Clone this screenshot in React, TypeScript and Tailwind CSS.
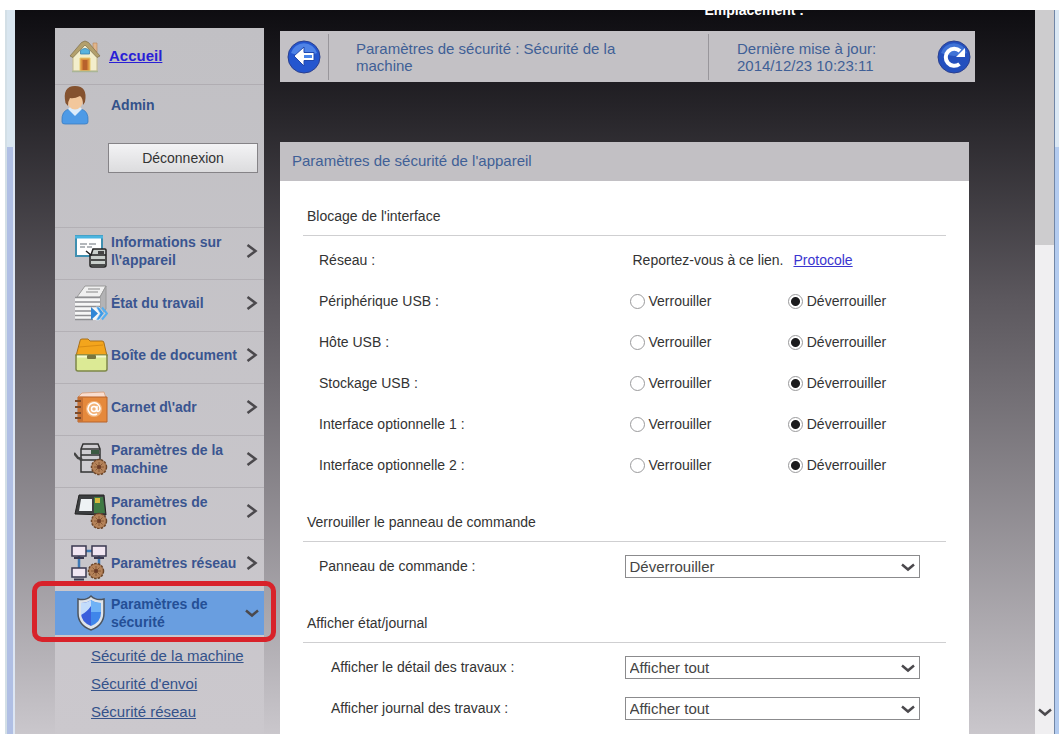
import React, { useId, useState } from "react";

function HomeIcon() {
  return (
    <svg viewBox="0 0 32 34" className="h-[34px] w-8" aria-hidden="true">
      <path d="M24 4h4v9h-4z" fill="#e0b58c" stroke="#b98356" strokeWidth=".6" />
      <path d="M4 15 16 4l12 11v17H4z" fill="#f3eecb" stroke="#c4b98c" />
      <path d="M1 17 12.500 3.500Q16 .5 19.500 3.500L31 17l-3 1.500L16 6 4 18.500z" fill="#b3a06c" stroke="#7d6d49" strokeWidth=".7" />
      <path d="M11.500 15v-3.500q4.500-4 9 0V15z" fill="#58b3dd" stroke="#3a7fa8" strokeWidth=".8" />
      <path d="M11 19h10v13H11z" fill="#dc9440" stroke="#e8ca6a" />
      <path d="M13.500 21h5v10h-5z" fill="#b8622c" />
      <path d="M3 32.500h26" stroke="#a9b596" strokeWidth="1.500" />
    </svg>
  );
}

function UserIcon() {
  return (
    <svg viewBox="0 0 28 40" className="h-10 w-7" aria-hidden="true">
      <path d="M1 37q-1-12 8-13h10q9 1 8 13 0 2-3 2H4q-3 0-3-2z" fill="#4d9ae6" stroke="#3b7cc0" strokeWidth=".8" />
      <path d="M7 24l7 7 7-7-2-2H9z" fill="#dcecfb" />
      <ellipse cx="14" cy="15" rx="8" ry="9.500" fill="#f2c79b" />
      <path d="M4.500 18Q1 1 14 1t10 16l-2 3q0-7-3-9-6 3-10 2-2 3-2 8z" fill="#84522f" />
    </svg>
  );
}

function Cog({ x, y }: { x: number; y: number }) {
  return (
    <g transform={`translate(${x} ${y})`}>
      <circle r="7.500" fill="#a9764f" stroke="#6b4528" strokeWidth="1.500" strokeDasharray="2.500 1.200" />
      <circle r="6.500" fill="#b5835a" />
      <path d="M0-5V5M-5 0H5M-3.500-3.500l7 7M3.500-3.500l-7 7" stroke="#8a5b37" />
      <circle r="2" fill="#6b3a26" />
    </g>
  );
}

function InfoIcon() {
  return (
    <svg viewBox="0 0 34 34" className="h-[34px] w-[34px]" aria-hidden="true">
      <rect x="2" y="2" width="26" height="20" fill="#fff" stroke="#3f8fb0" strokeWidth="2" />
      <path d="M1 3h28" stroke="#4bb5e0" strokeWidth="3" />
      <path d="M6 10h7M15 10h7M6 13h5M13 13h5" stroke="#9aa0a5" strokeWidth="1.500" />
      <path d="M16 21v10q0 2 2 2h12q2 0 2-2V16q0-1-1-1H19l-2 6z" fill="#c9cfcb" stroke="#222" strokeWidth="1.500" />
      <path d="M12 17l5 4h15M17 26h14M17 31h14" fill="none" stroke="#222" strokeWidth="1.500" />
      <path d="M24 17h6v3h-6z" fill="#444" />
    </svg>
  );
}

function JobIcon() {
  return (
    <svg viewBox="0 0 34 36" className="h-9 w-[34px]" aria-hidden="true">
      <path d="M3 12 11 1h21l-6 11z" fill="#f0f0f0" stroke="#999" />
      <path d="M26 12l6-11v23l-6 8z" fill="#b3b3b5" stroke="#999" />
      <path d="M1 12h25v23H1z" fill="#f6f6f6" />
      <path d="M1 12.500h25M1 17h25M1 21.500h25M1 26h18M1 30.500h18M1 34.500h18" stroke="#8f8f92" strokeWidth="1.500" />
      <path d="M14 4h12M12 7h12" stroke="#aaa" strokeWidth="1.500" />
      <path d="M17 22l7 6.500-7 6.500z" fill="#2f86d6" />
      <path d="M22 22h3l5 6.500-5 6.500h-3l4-6.500z" fill="#3f9be6" stroke="#d7ebfa" strokeWidth=".6" />
      <path d="M28 22.500l5 6-5 6" fill="none" stroke="#54aef0" strokeWidth="2" />
    </svg>
  );
}

function BoxIcon() {
  return (
    <svg viewBox="0 0 34 36" className="h-9 w-[34px]" aria-hidden="true">
      <path d="M6 4q0-2 2-2h6l2 2h12q2 0 2 2l3 13H2z" fill="#f3a51c" stroke="#a9701a" />
      <path d="M5 10l24-2" stroke="#d98c12" />
      <path d="M2 18h31v14q0 2-2 2H4q-2 0-2-2z" fill="#dcea95" stroke="#7d8748" strokeWidth="1.500" />
      <path d="M3 19.500h29" stroke="#f5fad0" strokeWidth="2" />
      <rect x="13" y="18" width="9" height="4" rx="1" fill="#77763f" />
    </svg>
  );
}

function BookIcon() {
  return (
    <svg viewBox="0 0 34 34" className="h-[34px] w-[34px]" aria-hidden="true">
      <path d="M4 7 8 3l22-1 2 6z" fill="#f9ddcf" stroke="#d69a74" strokeWidth=".8" />
      <path d="M4 7h29v25H4z" fill="#e5893c" stroke="#b8622a" />
      <path d="M4 7h5v25H4z" fill="#c87234" />
      <path d="M1 11h6M1 17h6M1 23h6M1 28h6" stroke="#7d4a28" strokeWidth="2" />
      <circle cx="20" cy="19" r="8" fill="#f3b57c" />
      <path d="M23 16v5q3 1 3-3a6 6 0 1 0-3 6" fill="none" stroke="#fff" strokeWidth="1.500" />
      <circle cx="20" cy="19" r="2.500" fill="none" stroke="#fff" strokeWidth="1.500" />
    </svg>
  );
}

function MachineIcon() {
  return (
    <svg viewBox="0 0 34 34" className="h-[34px] w-[34px]" aria-hidden="true">
      <path d="M7 7 9 2h15l2 5v23H7z" fill="#cfcdd1" stroke="#333" strokeWidth="1.500" />
      <path d="M7 7h19M7 13h19M7 18h19" stroke="#333" strokeWidth="1.500" />
      <path d="M17 8h8v4h-8z" fill="#3b5a42" />
      <path d="M0 11l4 5 3 1v2" fill="none" stroke="#444" strokeWidth="2.500" />
      <Cog x={25} y={25} />
    </svg>
  );
}

function FunctionIcon() {
  return (
    <svg viewBox="0 0 34 36" className="h-9 w-[34px]" aria-hidden="true">
      <path d="M5 2h25l2 20-31-1z" fill="#3c3e40" stroke="#222" />
      <path d="M7 6h11v12H5z" fill="#eef2f4" />
      <path d="M20 4h9l2 16H20z" fill="#3f7a44" />
      <path d="M21 5h5v5h-5z" fill="#d6b93d" />
      <Cog x={25} y={28} />
    </svg>
  );
}

function NetworkIcon() {
  return (
    <svg viewBox="0 0 38 38" className="h-[38px] w-[38px]" aria-hidden="true">
      <path d="M9 12v14M14 7h10M29 12v10" stroke="#3f79b5" strokeWidth="2.500" />
      <rect x="2" y="2" width="14" height="10" fill="#f1e6f2" stroke="#3a3850" strokeWidth="1.500" />
      <rect x="22" y="2" width="14" height="10" fill="#f1e6f2" stroke="#3a3850" strokeWidth="1.500" />
      <rect x="2" y="24" width="14" height="9" fill="#f1e6f2" stroke="#3a3850" strokeWidth="1.500" />
      <path d="M4 14h10M24 14h10M4 35.500h10" stroke="#3a3850" strokeWidth="2" />
      <Cog x={26} y={27} />
    </svg>
  );
}

function ShieldIcon() {
  return (
    <svg viewBox="0 0 30 38" className="h-[38px] w-[30px]" aria-hidden="true">
      <path d="M15 2q5 5 13 3v14q0 12-13 17Q2 31 2 19V5q8 2 13-3z" fill="#dfe4ea" stroke="#4d545e" strokeWidth="1.500" />
      <path d="M15 6q4 3 10 3v10q0 9-10 13z" fill="#3f86ea" />
      <path d="M15 6q-4 3-10 3v10q0 9 10 13z" fill="#3a5fdc" />
      <path d="M15 6q4 3 10 3v9H15z" fill="#6fb2f6" />
      <path d="M15 6q-4 3-10 3v12q6-3 10-9z" fill="#c3dcfb" />
    </svg>
  );
}

function Chevron({ down = false }: { down?: boolean }) {
  return (
    <svg viewBox="0 0 16 16" className="h-4 w-4 shrink-0" aria-hidden="true">
      <path
        d={down ? "M2 5.500 8 10.500l6-5" : "M3.500 2 11.500 8l-8 6"}
        fill="none"
        stroke="#4b494d"
        strokeWidth="2.500"
      />
    </svg>
  );
}

function BackIcon() {
  return (
    <svg viewBox="0 0 34 34" className="h-[34px] w-[34px]" aria-hidden="true">
      <circle cx="17" cy="17" r="16" fill="#2456cf" stroke="#2a3f8f" />
      <path d="M4 13a13.500 13.500 0 0 1 26 0q-13 6-26 0z" fill="#4f83e6" />
      <path d="M7 16 17 7v5.500h10v8H17V26z" fill="#fff" stroke="#2148ad" />
      <path d="M17 15h8v3h-8z" fill="#4a86ea" />
    </svg>
  );
}

function RefreshIcon() {
  return (
    <svg viewBox="0 0 34 34" className="h-[34px] w-[34px]" aria-hidden="true">
      <circle cx="17" cy="17" r="16" fill="#2450be" stroke="#2a3f8f" />
      <path d="M4 13a13.500 13.500 0 0 1 26 0q-13 6-26 0z" fill="#4073d6" />
      <path d="M22.500 24a8.500 8.500 0 1 1 .5-13" fill="none" stroke="#fff" strokeWidth="4" />
      <path d="M28 8v9h-9z" fill="#fff" />
    </svg>
  );
}

const menu = [
  { label: "Informations sur l\\'appareil", Icon: InfoIcon },
  { label: "État du travail", Icon: JobIcon },
  { label: "Boîte de document", Icon: BoxIcon },
  { label: "Carnet d\\'adr", Icon: BookIcon },
  { label: "Paramètres de la machine", Icon: MachineIcon },
  { label: "Paramètres de fonction", Icon: FunctionIcon },
  { label: "Paramètres réseau", Icon: NetworkIcon },
];

const subMenu = ["Sécurité de la machine", "Sécurité d'envoi", "Sécurité réseau", "Certificats"];

function Sidebar() {
  return (
    <nav className="w-[209px] shrink-0 bg-linear-to-b from-[#c1c0c4] to-[#cbc8cd]">
      <div className="flex h-[57px] items-center gap-2 border-b border-[#b0adb2] pl-[14px]">
        <HomeIcon />
        <a href="#accueil" className="text-[15px] font-bold text-[#2a1fd6] underline">
          Accueil
        </a>
      </div>
      <div className="flex items-center gap-[22px] pl-[6px]">
        <UserIcon />
        <span className="text-[14px] font-bold text-[#34528a]">Admin</span>
      </div>
      <div className="flex pt-[18px] pr-[6px] pl-[53px]">
        <button
          type="button"
          className="h-[30px] flex-1 border border-[#858387] bg-linear-to-b from-[#f3f3f5] to-[#dcdcde] text-[14px] text-[#333]"
        >
          Déconnexion
        </button>
      </div>
      <ul className="mt-[54px]">
        {menu.map(({ label, Icon }) => (
          <li key={label} className="border-t border-[#b3b0b5]">
            <button type="button" className="flex h-[51px] w-full items-center pr-1 pb-[6px] text-left">
              <span className="flex w-14 shrink-0 justify-end pr-[3px]">
                <Icon />
              </span>
              <span className="min-w-0 flex-1 text-[14px] leading-[18px] font-bold text-[#3a5590]">{label}</span>
              <Chevron />
            </button>
          </li>
        ))}
      </ul>
      <div className="relative">
        <button
          type="button"
          aria-expanded="true"
          className="flex h-[44px] w-full items-center bg-[#699ee0] pr-1 text-left"
        >
          <span className="flex w-14 shrink-0 justify-end pr-[5px]">
            <ShieldIcon />
          </span>
          <span className="min-w-0 flex-1 pr-6 text-[14px] leading-[18px] font-bold text-[#244f96]">
            Paramètres de sécurité
          </span>
          <Chevron down />
        </button>
        <div className="pointer-events-none absolute -top-[10px] -right-[12px] -bottom-[7px] -left-[23px] rounded-[10px] border-[5px] border-[#d8222a]" />
      </div>
      <ul className="pt-[7px] pl-9">
        {subMenu.map((label) => (
          <li key={label} className="h-7 text-[15px] leading-7">
            <a href="#securite" className="text-[#34528a] underline">
              {label}
            </a>
          </li>
        ))}
      </ul>
    </nav>
  );
}

function Section({ title, children }: { title: string; children: React.ReactNode }) {
  return (
    <section className="px-[23px]">
      <h3 className="h-[30px] border-b border-[#cfcfd1] pl-1 text-[14px] leading-5">{title}</h3>
      <div className="pt-1">{children}</div>
    </section>
  );
}

function RadioRow({ label }: { label: string }) {
  const id = useId();
  const [value, setValue] = useState("Déverrouiller");
  return (
    <div role="radiogroup" aria-labelledby={id} className="grid h-[41px] grid-cols-2 items-center">
      <span id={id} className="pl-4">
        {label}
      </span>
      <div className="grid grid-cols-2 pl-[5px]">
        {["Verrouiller", "Déverrouiller"].map((option) => (
          <label key={option} className="flex items-center gap-1">
            <input
              type="radio"
              name={id}
              checked={value === option}
              onChange={() => setValue(option)}
              className="h-[15px] w-[15px] appearance-none rounded-full border border-[#9a9a9c] bg-white checked:bg-[radial-gradient(circle,#1c1c1e_4px,#fff_5px)]"
            />
            {option}
          </label>
        ))}
      </div>
    </div>
  );
}

function SelectRow({ label, options, nested = false }: { label: string; options: string[]; nested?: boolean }) {
  const id = useId();
  return (
    <div className="grid h-[41px] grid-cols-2 items-center">
      <label htmlFor={id} className={nested ? "pl-7" : "pl-4"}>
        {label}
      </label>
      <div className="relative mr-[26px]">
        <select
          id={id}
          className="block h-[23px] w-full appearance-none border border-[#8b8b8d] bg-white pl-1 text-[15px] leading-5 text-[#444]"
        >
          {options.map((option) => (
            <option key={option}>{option}</option>
          ))}
        </select>
        <span className="pointer-events-none absolute inset-y-0 right-1 flex items-center">
          <Chevron down />
        </span>
      </div>
    </div>
  );
}

export default function App() {
  return (
    <div className="flex h-screen flex-col overflow-hidden bg-white pt-[10px] font-['Liberation_Sans',Arial,sans-serif]">
      <div className="flex min-h-0 flex-1">
        <div className="ml-[5px] flex w-[10px] shrink-0 flex-col border-l-2 border-[#d3dfe6] bg-[#d9e6f0]">
          <div className="h-[137px]" />
          <div className="flex-1 border-r-2 border-[#dde6f3] bg-[#b0bfe4]" />
        </div>

        <div className="flex min-w-0 flex-1 overflow-hidden bg-linear-to-b from-[#0e0d11] via-[#5c585e] to-[#cac7cc] from-0% via-40% to-100% pt-[18px] pl-[40px]">
          <Sidebar />
          <main className="relative ml-4 flex min-w-0 flex-1 flex-col pt-[3px] pr-[60px]">
            <div className="absolute -top-[28px] right-[231px] text-[14px] leading-5 font-bold text-white">
              Emplacement :
            </div>
            <header className="flex h-[51px] shrink-0 items-center bg-[#c3c1c5] text-[15px] leading-[17px] text-[#3f5f96]">
              <button type="button" aria-label="Retour" className="pr-[7px] pl-[7px]">
                <BackIcon />
              </button>
              <div className="flex h-[46px] min-w-0 flex-1 items-center border-x border-[#98969b] pr-16 pl-[27px]">
                <h1>Paramètres de sécurité : Sécurité de la machine</h1>
              </div>
              <p className="w-[200px] pr-4 pl-7">Dernière mise à jour: 2014/12/23 10:23:11</p>
              <button type="button" aria-label="Actualiser" className="pr-1 pl-7">
                <RefreshIcon />
              </button>
            </header>

            <div className="mt-[60px] mr-[6px] min-h-0 flex-1 bg-white text-[14px] text-[#333]">
              <h2 className="h-[39px] bg-[#c2c0c4] pl-3 text-[15px] leading-[38px] text-[#3f5f96]">
                Paramètres de sécurité de l'appareil
              </h2>
              <form className="flex flex-col gap-[26px] pt-[25px]">
                <Section title="Blocage de l'interface">
                  <div className="grid h-[41px] grid-cols-2 items-center">
                    <span className="pl-4">Réseau :</span>
                    <span className="flex gap-[10px] pl-2">
                      Reportez-vous à ce lien.
                      <a href="#protocole" className="text-[#3a35cf] underline">
                        Protocole
                      </a>
                    </span>
                  </div>
                  <RadioRow label="Périphérique USB :" />
                  <RadioRow label="Hôte USB :" />
                  <RadioRow label="Stockage USB :" />
                  <RadioRow label="Interface optionnelle 1 :" />
                  <RadioRow label="Interface optionnelle 2 :" />
                </Section>
                <Section title="Verrouiller le panneau de commande">
                  <SelectRow label="Panneau de commande :" options={["Déverrouiller", "Verrouiller"]} />
                </Section>
                <Section title="Afficher état/journal">
                  <SelectRow nested label="Afficher le détail des travaux :" options={["Afficher tout", "Masquer tout"]} />
                  <SelectRow nested label="Afficher journal des travaux :" options={["Afficher tout", "Masquer tout"]} />
                </Section>
              </form>
            </div>
          </main>
        </div>

        <div className="flex w-[19px] shrink-0 flex-col items-center bg-[#f0eff1]">
          <div className="h-[235px] w-full bg-[#cdccce]" />
          <div className="flex flex-1 items-end pb-[14px]">
            <Chevron down />
          </div>
        </div>
        <div className="flex w-[5px] shrink-0 flex-col border-l border-[#7186a6] bg-[#dbe8f4]">
          <div className="h-[137px]" />
          <div className="flex-1 bg-[#b3cbef]" />
        </div>
      </div>
    </div>
  );
}
